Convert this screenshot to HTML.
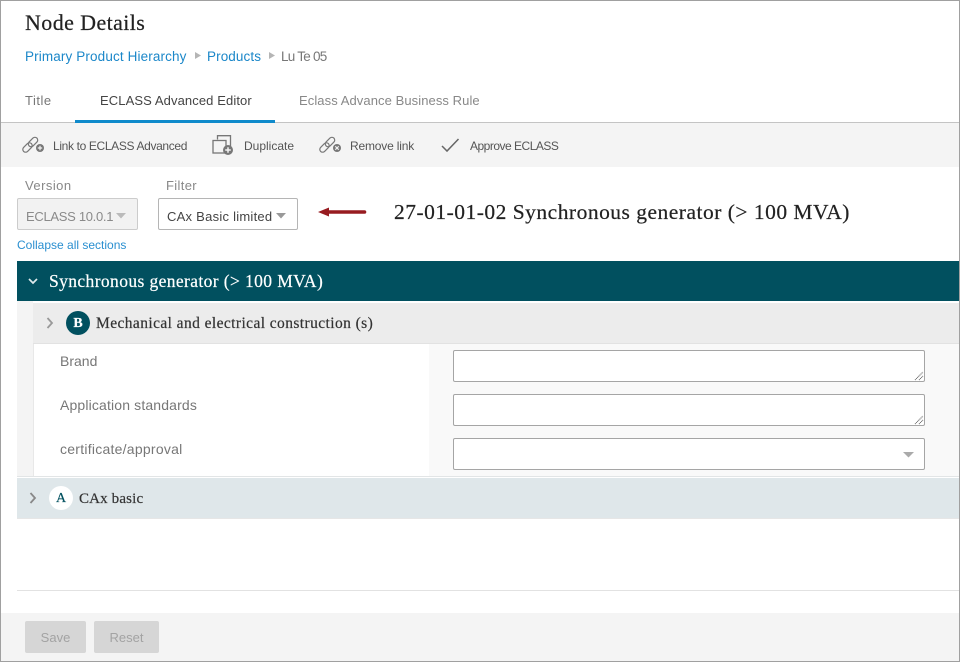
<!DOCTYPE html>
<html><head><meta charset="utf-8">
<style>
html,body{margin:0;padding:0;background:#fff}
#p{position:relative;width:960px;height:662px;overflow:hidden;background:#fff;font-family:"Liberation Sans",sans-serif;color:#555}
#p div,#p svg,#p span.t{position:absolute}
.t{white-space:nowrap;line-height:20px}
.s{font-family:"Liberation Serif",serif;color:#222;-webkit-text-stroke:.2px}
.b{color:#1b87c9}
</style></head><body>
<div id="p">
<div style="left:0;top:123px;width:960px;height:44px;background:#f4f4f4"></div>
<div style="left:0;top:122px;width:960px;height:1px;background:#c4c4c4"></div>
<div style="left:75px;top:120px;width:200px;height:3px;background:#0f8acb"></div>

<span class="t s" style="left:25px;top:13px;font-size:22px;letter-spacing:.4px;color:#222">Node Details</span>
<span class="t b" style="left:25px;top:47px;font-size:13.5px;letter-spacing:.13px">Primary Product Hierarchy</span>
<svg style="left:194px;top:51px" width="8" height="10"><path d="M1 1l6 3.500-6 3.500z" fill="#b5b5b5"/></svg>
<span class="t b" style="left:207px;top:47px;font-size:13.5px;letter-spacing:.1px">Products</span>
<svg style="left:268px;top:51px" width="8" height="10"><path d="M1 1l6 3.500-6 3.500z" fill="#b5b5b5"/></svg>
<span class="t" style="left:281px;top:47px;font-size:13.5px;color:#777;letter-spacing:-.75px">Lu Te 05</span>

<span class="t" style="left:25px;top:91px;font-size:13px;color:#777;letter-spacing:.5px">Title</span>
<span class="t" style="left:100px;top:91px;font-size:13px;color:#444;letter-spacing:.1px">ECLASS Advanced Editor</span>
<span class="t" style="left:299px;top:91px;font-size:13px;color:#888;letter-spacing:.08px">Eclass Advance Business Rule</span>

<!-- toolbar -->
<svg style="left:22px;top:136px" width="23" height="18" fill="none" stroke="#777" stroke-width="1.200"><rect x="-5.500" y="-2.800" width="11" height="5.600" rx="2.800" transform="translate(5.500 11.500) rotate(-45)"/><rect x="-5.500" y="-2.800" width="11" height="5.600" rx="2.800" transform="translate(11 6) rotate(-45)"/><circle cx="18" cy="12" r="4" fill="#777" stroke="none"/><path d="M15.800 12h4.400M18 9.800v4.400" stroke="#f4f4f4" stroke-width="1.200"/></svg>
<span class="t" style="left:53px;top:136px;font-size:12px;color:#555;letter-spacing:-.35px">Link to ECLASS Advanced</span>
<svg style="left:212px;top:135px" width="23" height="21" fill="none" stroke="#777" stroke-width="1.300"><path d="M5.500 4.500V.7h13v11"/><rect x="1" y="5.500" width="13" height="12.500" fill="#f4f4f4"/><circle cx="16" cy="15" r="5" fill="#777" stroke="none"/><path d="M13.200 15h5.600M16 12.200v5.600" stroke="#f4f4f4" stroke-width="1.500"/></svg>
<span class="t" style="left:244px;top:136px;font-size:12px;color:#555">Duplicate</span>
<svg style="left:319px;top:136px" width="23" height="18" fill="none" stroke="#777" stroke-width="1.200"><rect x="-5.500" y="-2.800" width="11" height="5.600" rx="2.800" transform="translate(5.500 11.500) rotate(-45)"/><rect x="-5.500" y="-2.800" width="11" height="5.600" rx="2.800" transform="translate(11 6) rotate(-45)"/><circle cx="18" cy="12" r="4" fill="#777" stroke="none"/><path d="M16.300 10.300l3.400 3.400M19.700 10.300l-3.400 3.400" stroke="#f4f4f4" stroke-width="1.100"/></svg>
<span class="t" style="left:350px;top:136px;font-size:12px;color:#555;letter-spacing:-.18px">Remove link</span>
<svg style="left:441px;top:138px" width="19" height="15" fill="none" stroke="#666" stroke-width="1.500"><path d="M1 8l5 5L17.500 1"/></svg>
<span class="t" style="left:470px;top:136px;font-size:12px;color:#555;letter-spacing:-.5px">Approve ECLASS</span>

<!-- selects -->
<span class="t" style="left:25px;top:176px;font-size:13px;color:#888;letter-spacing:.45px">Version</span>
<span class="t" style="left:166px;top:176px;font-size:13px;color:#888;letter-spacing:.35px">Filter</span>
<div style="left:17px;top:198px;width:119px;height:30px;background:#f2f2f2;border:1px solid #ccc;border-radius:2px"></div>
<span class="t" style="left:26px;top:207px;font-size:13px;color:#8a8a8a;letter-spacing:-.3px">ECLASS 10.0.1</span>
<svg style="left:116px;top:213px" width="10" height="6"><path d="M0 0h10L5 5.500z" fill="#bbb"/></svg>
<div style="left:158px;top:198px;width:138px;height:30px;background:#fff;border:1px solid #b5b5b5;border-radius:2px"></div>
<span class="t" style="left:167px;top:207px;font-size:13px;color:#444;letter-spacing:.25px">CAx Basic limited</span>
<svg style="left:276px;top:213px" width="10" height="6"><path d="M0 0h10L5 5.500z" fill="#999"/></svg>
<svg style="left:317px;top:205px" width="50" height="14"><path d="M1 7L12 2.500V5.200H47.500a1.800 1.800 0 0 1 0 3.600H12v2.700z" fill="#971b20"/></svg>
<span class="t s" style="left:394px;top:202px;font-size:21.500px;letter-spacing:.49px">27-01-01-02 Synchronous generator (&gt; 100 MVA)</span>
<span class="t b" style="left:17px;top:235px;font-size:12px;color:#2a8fd0">Collapse all sections</span>

<!-- teal -->
<div style="left:17px;top:261px;width:943px;height:40px;background:#01505f"></div>
<svg style="left:28px;top:278px" width="10" height="7" fill="none" stroke="#dfe9eb" stroke-width="1.700"><path d="M1 1l4 4 4-4"/></svg>
<span class="t s" style="left:49px;top:271px;font-size:17.500px;letter-spacing:.39px;color:#fff">Synchronous generator (&gt; 100 MVA)</span>

<div style="left:17px;top:301px;width:16px;height:175px;background:#f4f4f4"></div>
<div style="left:33px;top:303px;width:927px;height:40px;background:#ececec"></div>
<div style="left:33px;top:343px;width:927px;height:1px;background:#e2e2e2"></div>
<div style="left:33px;top:344px;width:1px;height:132px;background:#e8e8e8"></div>
<svg style="left:46px;top:317px" width="8" height="12" fill="none" stroke="#999" stroke-width="1.800"><path d="M1.500 1l4.500 5-4.500 5"/></svg>
<div style="left:66px;top:311px;width:24px;height:24px;border-radius:12px;background:#01505f"></div>
<span class="t s" style="left:66px;top:314px;width:24px;text-align:center;font-size:14px;font-weight:bold;color:#fff">B</span>
<span class="t s" style="left:96px;top:314px;font-size:15.500px;letter-spacing:.41px;color:#333">Mechanical and electrical construction (s)</span>

<div style="left:429px;top:344px;width:531px;height:132px;background:#f9f9f9"></div>
<span class="t" style="left:60px;top:351px;font-size:14px;color:#777">Brand</span>
<span class="t" style="left:60px;top:395px;font-size:14px;color:#777;letter-spacing:.15px">Application standards</span>
<span class="t" style="left:60px;top:439px;font-size:14px;color:#777;letter-spacing:.25px">certificate/approval</span>

<div style="left:453px;top:350px;width:470px;height:30px;background:#fff;border:1px solid #a5a5a5;border-radius:2px"></div>
<svg style="left:914px;top:371px" width="10" height="10" stroke="#666" stroke-width="1" stroke-dasharray="1 .6" fill="none"><path d="M1 9l8-8M5 9l4-4"/></svg>
<div style="left:453px;top:394px;width:470px;height:30px;background:#fff;border:1px solid #a5a5a5;border-radius:2px"></div>
<svg style="left:914px;top:415px" width="10" height="10" stroke="#666" stroke-width="1" stroke-dasharray="1 .6" fill="none"><path d="M1 9l8-8M5 9l4-4"/></svg>
<div style="left:453px;top:438px;width:470px;height:30px;background:#fff;border:1px solid #a5a5a5;border-radius:2px"></div>
<svg style="left:903px;top:452px" width="11" height="6"><path d="M0 0h11L5.500 5.500z" fill="#aaa"/></svg>

<div style="left:17px;top:476px;width:943px;height:1px;background:#e2e5e6"></div>
<div style="left:17px;top:478px;width:943px;height:40px;background:#dfe7ea"></div>
<div style="left:17px;top:518px;width:943px;height:1px;background:#e6e6e6"></div>
<svg style="left:29px;top:492px" width="8" height="12" fill="none" stroke="#888" stroke-width="1.800"><path d="M1.500 1l4.500 5-4.500 5"/></svg>
<div style="left:49px;top:486px;width:24px;height:24px;border-radius:12px;background:#fff"></div>
<span class="t s" style="left:49px;top:489px;width:24px;text-align:center;font-size:14px;color:#01505f">A</span>
<span class="t s" style="left:79px;top:489px;font-size:15px;letter-spacing:.15px;color:#333">CAx basic</span>

<div style="left:17px;top:590px;width:943px;height:1px;background:#e2e2e2"></div>
<div style="left:0;top:613px;width:960px;height:49px;background:#f4f4f4"></div>
<div style="left:25px;top:621px;width:61px;height:32px;background:#d6d6d6;border-radius:2px"></div>
<span class="t" style="left:25px;top:628px;width:61px;text-align:center;font-size:13px;color:#a3a3a3">Save</span>
<div style="left:94px;top:621px;width:65px;height:32px;background:#d6d6d6;border-radius:2px"></div>
<span class="t" style="left:94px;top:628px;width:65px;text-align:center;font-size:13px;color:#a3a3a3">Reset</span>

<div style="left:0;top:0;width:958px;height:660px;border:1px solid #a0a0a0"></div>
</div>
</body></html>
